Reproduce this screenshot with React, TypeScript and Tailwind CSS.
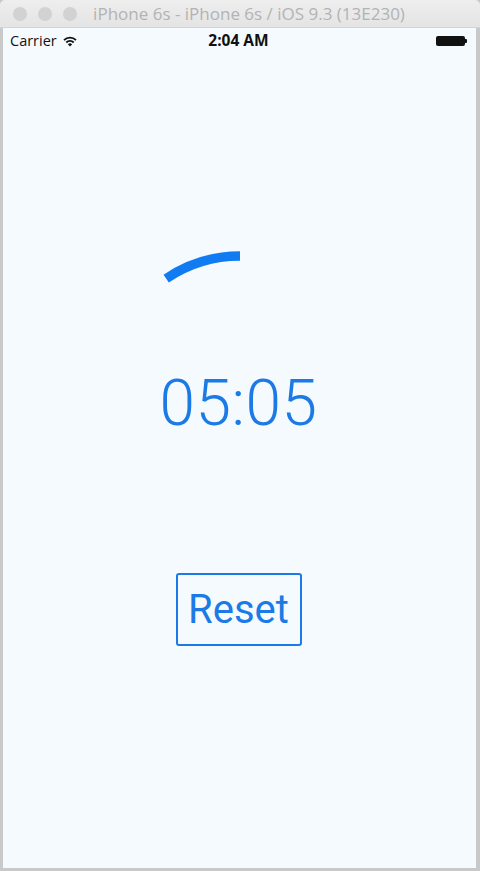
import React from "react";

export default function App() {
  const cx = 240;
  const cy = 388;
  const r = 132;
  const a1 = (-90 * Math.PI) / 180;
  const a0 = (-124 * Math.PI) / 180;
  const x0 = cx + r * Math.cos(a0);
  const y0 = cy + r * Math.sin(a0);
  const x1 = cx + r * Math.cos(a1);
  const y1 = cy + r * Math.sin(a1);
  return (
    <div className="w-[480px] h-[871px] bg-[#c9c9c9] flex flex-col overflow-hidden" style={{ fontFamily: "'Liberation Sans', Arial, sans-serif" }}>
      {/* title bar */}
      <div className="h-[28px] bg-gradient-to-b from-[#eeeeee] to-[#e4e4e4] border-b border-[#d4d4d4] rounded-t-[5px] flex items-center relative shrink-0">
        <div className="flex gap-[11px] pl-[13px]">
          <div className="w-[14px] h-[14px] rounded-full bg-[#d2d2d2]" />
          <div className="w-[14px] h-[14px] rounded-full bg-[#d2d2d2]" />
          <div className="w-[14px] h-[14px] rounded-full bg-[#d2d2d2]" />
        </div>
        <div className="absolute left-0 right-0 top-0 h-[28px] flex items-center justify-center text-[17px] text-[#b3b3b3] pl-[18px]" style={{ fontFamily: "'Open Sans', 'Liberation Sans', sans-serif" }}>
          iPhone 6s - iPhone 6s / iOS 9.3 (13E230)
        </div>
      </div>
      {/* screen */}
      <div className="flex-1 ml-[3px] mr-[4px] mb-[3px] bg-[#f5faff] flex flex-col relative">
        {/* status bar */}
        <div className="h-[26px] flex items-center justify-between px-[7px] relative text-[#111]">
          <div className="flex items-center gap-[6px] text-[14.5px]" style={{ fontFamily: "'Open Sans', sans-serif" }}>
            <span>Carrier</span>
            <svg width="14" height="11" viewBox="0 0 14 11">
              <path d="M1 4.2 A8.5 8.5 0 0 1 13 4.2" stroke="#111" strokeWidth="1.8" fill="none" />
              <path d="M3.3 6.5 A5.3 5.3 0 0 1 10.7 6.5" stroke="#111" strokeWidth="1.8" fill="none" />
              <path d="M7 10.5 L4.9 8.4 A3 3 0 0 1 9.1 8.4 Z" fill="#111" />
            </svg>
          </div>
          <div className="absolute left-0 right-0 top-0 h-[26px] flex items-center justify-center text-[15.5px] font-bold pr-[2px]" style={{ fontFamily: "'Open Sans', sans-serif" }}>
            2:04 AM
          </div>
          <div className="flex items-center mr-[2px]">
            <div className="w-[29px] h-[10px] bg-[#111] rounded-[2px]" />
            <div className="w-[2px] h-[4px] bg-[#111] rounded-r-[1px]" />
          </div>
        </div>
        {/* arc */}
        <svg className="absolute left-[-3px] top-[-28px]" width="480" height="600" viewBox="0 0 480 600">
          <path d={`M ${x0} ${y0} A ${r} ${r} 0 0 1 ${x1} ${y1}`} stroke="#117cf2" strokeWidth="9.5" fill="none" />
        </svg>
        <div className="h-[314px]" />
        <div className="flex justify-center">
          <div className="text-[64px] leading-[72px] text-[#1b7ae6] font-light tracking-[0.5px] pr-[2px]" style={{ fontFamily: "Roboto, sans-serif" }}>
            05:05
          </div>
        </div>
        <div className="h-[133px]" />
        <div className="flex justify-center pr-[2px]">
          <div className="w-[126px] h-[73px] border-2 border-[#1b7ae6] rounded-[3px] flex items-center justify-center text-[40px] text-[#1b7ae6]" style={{ fontFamily: "Roboto, sans-serif" }}>
            Reset
          </div>
        </div>
      </div>
    </div>
  );
}
